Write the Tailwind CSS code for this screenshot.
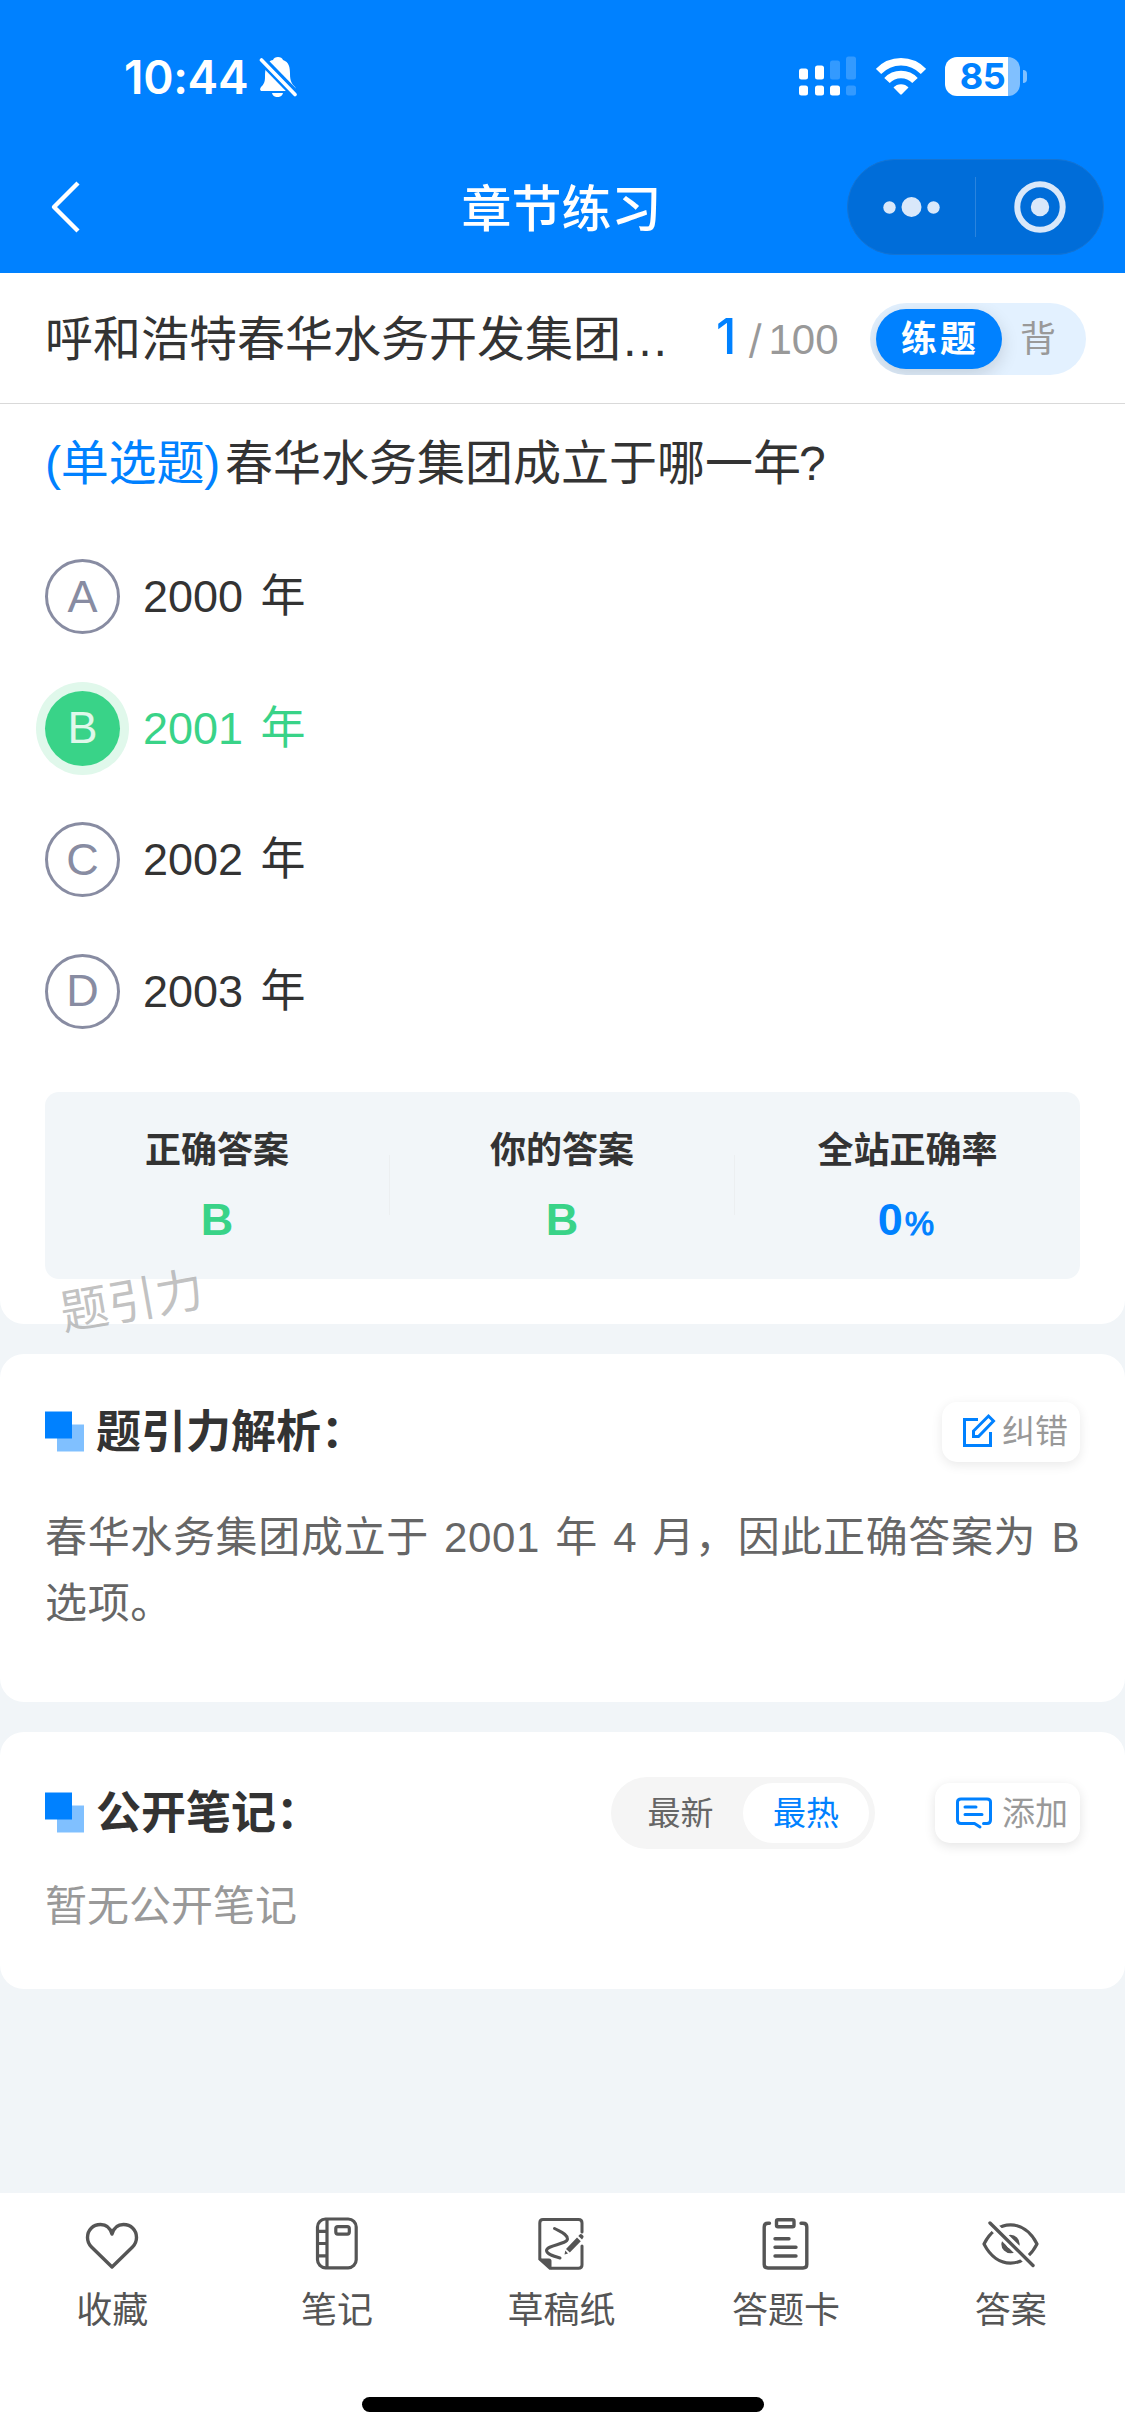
<!DOCTYPE html>
<html lang="zh-CN">
<head>
<meta charset="utf-8">
<title>章节练习</title>
<script src="https://cdn.jsdelivr.net/npm/@tailwindcss/browser@4"></script>
</head>
<body class="bg-[#f1f5f8]">
<div class="flex h-[2436px] w-[1125px] flex-col overflow-hidden bg-[#f1f5f8] font-['Liberation_Sans','Noto_Sans_CJK_SC',sans-serif] text-[#333]">

  <header class="h-[273px] shrink-0 bg-[#0081ff] text-white">
    <div class="flex h-[152px] items-center justify-between pr-[98px] pl-[124px]">
      <div class="flex items-center gap-[11px]">
        <span class="pt-[2px] font-['Inter',sans-serif] text-[46px] leading-[60px] font-semibold tracking-[-0.3px]">10:44</span>
        <svg class="h-[42px] w-[40px]" viewBox="0 0 40 42">
          <path fill="#fff" d="M3 36C1 36 0.500 34 2 32C5 29 6 27 6 22C6 12 8 6 14 5C15 1 23 1 24 5C30 7 31 12 31 19C31 26 33 29 36 32C37.500 34 37 36 35 36ZM13 38H24C23 43.500 14 43.500 13 38Z"/>
          <path stroke="#0081ff" stroke-width="9" d="M0 2L38 41"/>
          <path stroke="#fff" stroke-width="3.600" stroke-linecap="round" d="M2.500 5L36 39.500"/>
        </svg>
      </div>
      <div class="flex items-center gap-[19px]">
        <svg class="h-[40px] w-[58px]" viewBox="0 0 58 40" fill="#fff">
          <rect x="0" y="12.500" width="9" height="11" rx="2.500"/><rect x="16" y="9.500" width="9" height="14" rx="2.500"/>
          <rect x="31" y="4.500" width="10" height="19" rx="2.500" opacity=".2"/><rect x="47" y="0.500" width="10" height="23" rx="2.500" opacity=".2"/>
          <rect x="0" y="29.500" width="9" height="10" rx="2.500"/><rect x="16" y="29.500" width="9" height="10" rx="2.500"/>
          <rect x="31" y="29.500" width="10" height="10" rx="2.500"/><rect x="47" y="29.500" width="10" height="10" rx="2.500" opacity=".2"/>
        </svg>
        <svg class="h-[38px] w-[50px]" viewBox="0 0 50 38" fill="none" stroke="#fff">
          <path stroke-width="7.500" d="M2.500 14.500C15 1.500 35 1.500 47.500 14.500"/>
          <path stroke-width="7.500" d="M11 23.500C18.500 15.500 31.500 15.500 39 23.500"/>
          <path fill="#fff" stroke="none" d="M17.500 30.500C21 26 29 26 32.500 30.500L25.800 37.300Q25 38 24.200 37.300Z"/>
        </svg>
        <div class="flex items-center gap-[3px]">
          <div class="flex h-[39px] w-[75px] items-center justify-center rounded-[12px] bg-linear-to-r from-white from-[84%] to-[#80c0ff] to-[84%] font-['Inter',sans-serif] text-[36px] leading-[39px] font-bold tracking-[-0.5px] text-[#0081ff]">85</div>
          <div class="h-[13px] w-[4px] rounded-r-full bg-[#80c0ff]"></div>
        </div>
      </div>
    </div>
    <div class="grid h-[110px] grid-cols-[1fr_200px_1fr] items-center">
      <svg class="ml-[50px] h-[52px] w-[32px]" viewBox="0 0 32 52" fill="none" stroke="#fff" stroke-width="4.400" stroke-linejoin="round"><path d="M28 2L4 26L28 50"/></svg>
      <h1 class="-ml-[2px] pt-[5px] text-center text-[50px] leading-[60px] font-medium whitespace-nowrap">章节练习</h1>
      <div class="mr-[21px] flex h-[96px] w-[257px] items-center justify-self-end rounded-full border border-[#1474d4] bg-[#006dd9]">
        <svg class="h-[60px] w-[255px]" viewBox="0 0 255 60" fill="#d9e8fa">
          <circle cx="41.500" cy="30.500" r="6.200"/><circle cx="63.500" cy="30" r="10"/><circle cx="85.500" cy="30.500" r="6.200"/>
          <rect x="127" y="0" width="1" height="60" fill="#2a84de"/>
          <circle cx="192" cy="30" r="22.700" fill="none" stroke="#d9e8fa" stroke-width="6"/><circle cx="192" cy="30" r="9.200"/>
        </svg>
      </div>
    </div>
  </header>

  <main class="flex flex-1 flex-col gap-[30px]">
    <section class="h-[1051px] rounded-b-[24px] bg-white">
      <div class="flex h-[131px] items-center border-b border-[#d9d9d9] pr-[39px] pl-[45px]">
        <div class="w-[630px] pt-[4px] text-[48px] leading-[60px] whitespace-nowrap">呼和浩特春华水务开发集团…</div>
        <div class="ml-[41px] flex w-[154px] items-baseline pt-[1px] whitespace-nowrap text-[#999]">
          <span class="w-[20px] font-['Inter',sans-serif] text-[49px] leading-[60px] font-medium text-[#0081ff]">1</span>
          <span class="ml-[12px] font-['Inter',sans-serif] text-[40px] leading-[60px]">/</span>
          <span class="ml-[6px] text-[42px] leading-[60px]">100</span>
        </div>
        <div class="mt-px flex h-[72px] w-[216px] items-center overflow-hidden rounded-full bg-[#e3f1ff] px-[6px]">
          <div class="flex h-[60px] w-[126px] items-center justify-center rounded-full bg-[#0081ff] pt-[2px] pl-[2px] text-[36px] font-bold tracking-[3px] text-white shadow-[0_6px_18px_rgba(0,0,0,0.14)]">练题</div>
          <div class="ml-[18px] pt-[2px] text-[36px] text-[#999]">背</div>
        </div>
      </div>

      <div class="flex h-[116px] items-center gap-[5px] pt-[3px] pl-[45px] text-[48px] leading-[60px]">
        <span class="tracking-[-0.2px] text-[#0081ff]">(单选题)</span><span>春华水务集团成立于哪一年<span class="-ml-[2px]">?</span></span>
      </div>

      <div class="mt-[39px] flex flex-col gap-[56.500px] pl-[45px] text-[45px] leading-[76px] [word-spacing:5px]">
        <div class="flex h-[75px] gap-[23px]"><span class="flex size-[75px] items-center justify-center rounded-full border-3 border-[#888ca2] text-[#888ca2]">A</span><span>2000 年</span></div>
        <div class="flex h-[75px] gap-[23px] text-[#39d388]"><span class="flex size-[75px] items-center justify-center rounded-full bg-[#39d388] text-[#e0f8eb] ring-9 ring-[#e0f8eb]">B</span><span>2001 年</span></div>
        <div class="flex h-[75px] gap-[23px]"><span class="flex size-[75px] items-center justify-center rounded-full border-3 border-[#888ca2] text-[#888ca2]">C</span><span>2002 年</span></div>
        <div class="flex h-[75px] gap-[23px]"><span class="flex size-[75px] items-center justify-center rounded-full border-3 border-[#888ca2] text-[#888ca2]">D</span><span>2003 年</span></div>
      </div>

      <div class="relative mx-[45px] mt-[63px] grid h-[187px] grid-cols-3 items-center rounded-[14px] bg-[#f2f6f9] text-center font-bold">
        <div class="flex h-[60px] flex-col justify-center border-r border-[#eceff1]"><span class="h-[69px] text-[36px] leading-[70px]">正确答案</span><span class="h-[70px] text-[45px] leading-[70px] text-[#39d388]">B</span></div>
        <div class="flex h-[60px] flex-col justify-center border-r border-[#eceff1]"><span class="h-[69px] text-[36px] leading-[70px]">你的答案</span><span class="h-[70px] text-[45px] leading-[70px] text-[#39d388]">B</span></div>
        <div class="flex h-[60px] flex-col justify-center"><span class="h-[69px] text-[36px] leading-[70px]">全站正确率</span><span class="h-[70px] pr-[3px] text-[45px] leading-[70px] text-[#0081ff]">0<span class="ml-[2px] text-[33px] font-medium [-webkit-text-stroke:1px_#0081ff]">%</span></span></div>
        <span class="absolute top-[174px] left-[15px] -rotate-10 text-[48px] leading-[72px] font-normal text-[#999]/60">题引力</span>
      </div>
    </section>

    <section class="h-[348px] rounded-[24px] bg-white px-[45px] pt-[48px]">
      <div class="flex h-[60px] items-center">
        <svg class="h-[42px] w-[40px]" viewBox="0 0 40 42"><path fill="#80c0ff" d="M12 13.500H39V40.500H12Z"/><path fill="#0081ff" d="M0 0.500H27V27.500H0Z"/></svg>
        <h2 class="ml-[11px] pt-[2px] text-[45px] leading-[60px] font-bold">题引力解析：</h2>
        <div class="ml-auto flex h-[60px] w-[138px] items-center rounded-[15px] bg-white pl-[20px] text-[33px] text-[#999] shadow-[0_3px_12px_rgba(0,0,0,0.09)]">
          <svg class="-mt-[2px] h-[36px] w-[36px]" viewBox="0 0 36 36" fill="none" stroke="#0081ff" stroke-width="3"><path d="M16 6.500H2.500V32.500H28.500V19"/><path d="M11.500 23.500V18L26.500 3L31.500 8L16.500 23.500Z"/></svg>
          <span class="ml-[4px]">纠错</span>
        </div>
      </div>
      <p class="mt-[43px] text-[42px] leading-[66px] tracking-[0.650px] whitespace-nowrap text-[#666]"><span class="[word-spacing:2.900px]">春华水务集团成立于 2001 年 4 月，因此正确答案为 B</span><br>选项。</p>
    </section>

    <section class="h-[257px] rounded-[24px] bg-white px-[45px] pt-[45px]">
      <div class="flex h-[72px] items-center">
        <svg class="h-[42px] w-[40px]" viewBox="0 0 40 42"><path fill="#80c0ff" d="M12 13.500H39V40.500H12Z"/><path fill="#0081ff" d="M0 0.500H27V27.500H0Z"/></svg>
        <h2 class="ml-[11px] pt-[2px] text-[45px] leading-[60px] font-bold">公开笔记：</h2>
        <div class="ml-auto flex h-[72px] w-[264px] items-center rounded-full bg-[#f5f5f5] p-[6px] text-center text-[33px] leading-[62px] text-[#666]">
          <span class="h-[60px] w-[126px] pl-[1px]">最新</span><span class="h-[60px] w-[126px] rounded-full bg-white text-[#0081ff]">最热</span>
        </div>
        <div class="ml-[60px] flex h-[60px] w-[145px] items-center rounded-[15px] bg-white pl-[20px] text-[33px] text-[#999] shadow-[0_3px_12px_rgba(0,0,0,0.11)]">
          <svg class="-mt-px h-[36px] w-[38px]" viewBox="0 0 38 36" fill="none" stroke="#0081ff" stroke-width="3" stroke-linecap="round" stroke-linejoin="round"><path d="M25 32L19.500 28.500H6Q2.500 28.500 2.500 25V7Q2.500 4 6 4H32Q35.500 4 35.500 7V25Q35.500 28.500 32 28.500H28.500M10 12H21M10 19.500H27"/></svg>
          <span class="ml-[9px] pt-px">添加</span>
        </div>
      </div>
      <p class="mt-[28px] text-[42px] leading-[60px] text-[#999]">暂无公开笔记</p>
    </section>
  </main>

  <footer class="flex h-[243px] shrink-0 flex-col items-center bg-white">
    <nav class="grid w-full grid-cols-5 pt-[21px] pr-[2px] text-[36px] leading-[60px] text-[#555]">
      <div class="flex flex-col items-center gap-[7px]">
        <svg class="size-[60px]" viewBox="0 0 60 60" fill="none" stroke="#555" stroke-width="3.400" stroke-linejoin="round"><path d="M30 20C28 13 23 10.500 18.500 10.500C11 10.500 5.500 16 5.500 23.500C5.500 27 7 30.500 9.500 33L30 53L50.500 33C53 30.500 54.500 27 54.500 23.500C54.500 16 49 10.500 41.500 10.500C37 10.500 32 13 30 20Z"/></svg>
        <span>收藏</span>
      </div>
      <div class="flex flex-col items-center gap-[7px]">
        <svg class="size-[60px]" viewBox="0 0 60 60" fill="none" stroke="#555" stroke-width="3.200"><rect x="10.500" y="5" width="38.700" height="48.800" rx="8"/><path d="M20 5V54M10.500 17.300H20M10.500 29.500H20M10.500 41.800H20"/><rect x="28.800" y="12.600" width="13.500" height="7.500" rx="2"/></svg>
        <span>笔记</span>
      </div>
      <div class="flex flex-col items-center gap-[7px]">
        <svg class="size-[60px]" viewBox="0 0 60 60" fill="none" stroke="#555" stroke-width="3" stroke-linecap="round"><path d="M51 18V9Q51 5.500 47.500 5.500H12Q8.800 5.500 8.800 9V45L19 54.300H47.500Q51 54.300 51 51V32"/><path fill="#555" stroke="none" d="M8 44.500H18Q20.500 44.500 20.500 47V55.500Z"/><path d="M23.500 14.500C30 18 36.500 20 36.500 25C36 30.500 15.500 31 15.500 36.500C15.500 40 22 42 29 44"/><path fill="#555" stroke="none" d="M35 35L46 23.500L49.800 27.200L38.800 38.500ZM34.300 36.600L37 39.500L33.500 40.500ZM47.300 22L49 20.300Q50 19.500 51 20.400L52.300 21.800Q53 22.800 52.200 23.800L51 25.600Z"/></svg>
        <span>草稿纸</span>
      </div>
      <div class="flex flex-col items-center gap-[7px]">
        <svg class="size-[60px]" viewBox="0 0 60 60" fill="none" stroke="#555" stroke-width="3.400" stroke-linecap="round"><path d="M13.500 9.300H12Q8.200 9.300 8.200 13V50.500Q8.200 54 12 54H47Q50.800 54 50.800 50.500V13Q50.800 9.300 47 9.300H45M19 24.700H33M19 33.300H40M19 42H40"/><rect x="20.500" y="5.700" width="17.500" height="7" rx="1.500"/></svg>
        <span>答题卡</span>
      </div>
      <div class="flex flex-col items-center gap-[7px]">
        <svg class="size-[60px]" viewBox="0 0 60 60" fill="none" stroke="#555" stroke-width="3.200" stroke-linecap="round" stroke-linejoin="round"><path d="M3 30C16 4.500 43 4.500 56 30C43 55.500 16 55.500 3 30Z"/><circle cx="29.500" cy="30" r="6.700" stroke-width="5"/><path stroke="#fff" stroke-width="9" d="M5 5L55 54.500"/><path stroke-width="3.400" d="M9 9L52 51.500"/></svg>
        <span>答案</span>
      </div>
    </nav>
    <div class="mt-[56px] h-[15px] w-[402px] rounded-full bg-black"></div>
  </footer>
</div>
</body>
</html>
